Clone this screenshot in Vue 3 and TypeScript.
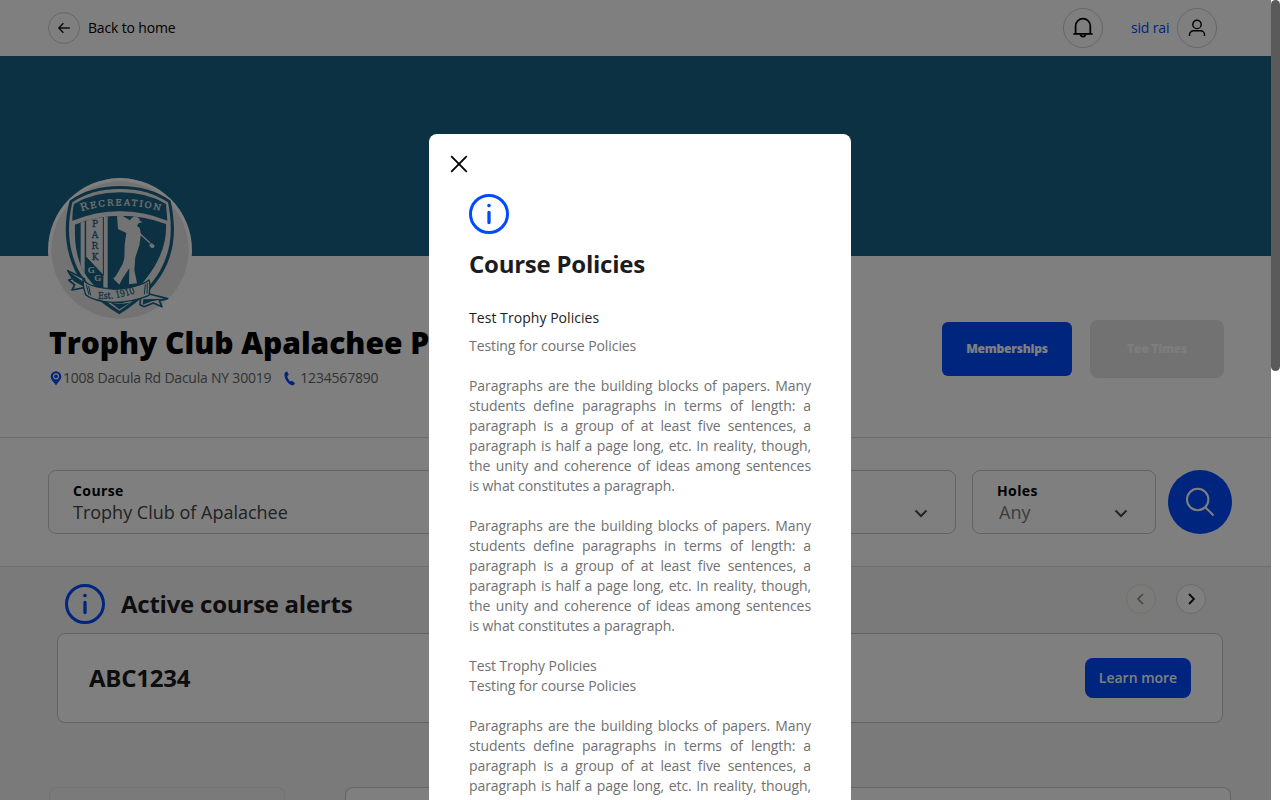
<script setup lang="ts">
interface Block {
  lines: string[]
}

const paragraph: string =
  'Paragraphs are the building blocks of papers. Many students define paragraphs in terms of length: a paragraph is a group of at least five sentences, a paragraph is half a page long, etc. In reality, though, the unity and coherence of ideas among sentences is\u00a0what constitutes a paragraph.'

const blocks: Block[] = [
  { lines: ['Testing for course Policies'] },
  { lines: [paragraph] },
  { lines: [paragraph] },
  { lines: ['Test Trophy Policies', 'Testing for course Policies'] },
  { lines: [paragraph] },
]

const parkLetters: string[] = ['P', 'A', 'R', 'K']
</script>

<template>
  <div class="screen">
    <div class="page">
      <header class="topbar">
        <a class="back">
          <span class="ring small">
            <svg width="14" height="14" viewBox="0 0 14 14" fill="none" stroke="#1c1c1c" stroke-width="1.4">
              <path d="M6.4 2.2 1.8 7l4.6 4.8M1.8 7h11" />
            </svg>
          </span>
          <span>Back to home</span>
        </a>
        <div class="account">
          <span class="ring">
            <svg width="24" height="24" viewBox="0 0 24 24" fill="none" stroke="#000" stroke-width="1.7">
              <path d="M4.600 17.800V10a7.300 7.300 0 0 1 14.700 0v7.800M2.400 17.800h19.200" />
              <path d="M9.300 18.600a2.800 2.800 0 0 0 5.400 0" />
            </svg>
          </span>
          <span class="user">sid rai</span>
          <span class="ring">
            <svg width="20" height="20" viewBox="0 0 20 20" fill="none" stroke="#000" stroke-width="1.4">
              <circle cx="10" cy="6.4" r="4.2" />
              <path d="M2.500 18v-1.200a4 4 0 0 1 4-4h7a4 4 0 0 1 4 4V18" />
            </svg>
          </span>
        </div>
      </header>

      <div class="banner"></div>

      <section class="club">
        <div class="club-logo">
          <svg width="144" height="144" viewBox="24 24 432 432">
            <defs>
              <path id="name-arc" d="M124 124Q240 88 364 124" />
              <path id="est-arc" d="M174 387Q232 390 294 366" />
              <clipPath id="field">
                <path d="M104 164Q240 112 378 162C382 240 340 320 242 405C112 335 104 250 104 164Z" />
              </clipPath>
            </defs>
            <circle cx="240" cy="240" r="206" fill="#e6e6e6" />
            <g fill="#166284">
              <path d="M89 92Q150 48 240 48T392 92C410 180 404 245 368 308Q330 374 238 433Q140 374 105 302C76 240 68 170 89 92Z" />
              <path d="M97 97Q155 57 240 57T384 97C400 178 394 240 360 302Q325 364 238 422Q150 366 114 298C84 236 80 170 97 97Z" fill="#e6e6e6" />
              <path d="M102 102Q160 67 240 67T378 102L382 152Q240 96 97 152Q97 120 102 102Z" />
              <path d="M240 402L212 398 238 418 270 398Z" />
            </g>
            <g clip-path="url(#field)">
              <rect x="90" y="100" width="300" height="300" fill="#166284" />
              <path d="M122 130h12v260h-12zM190 130h13v260h-13z" fill="#e6e6e6" />
              <path d="M137 148L190 133V316L137 260Z" fill="#e6e6e6" stroke="#166284" stroke-width="3" />
            </g>
            <g fill="#e6e6e6">
              <path d="M246 166L238 142 268 154 274 145 284 139 297 144 300 153 308 156 296 160 291 168 299 174 303 192 298 226 286 262 283 300 291 340 267 343 268 295 247 326 238 344 220 326 229 316 249 280 253 264 254 224 259 189 234 177 231 139 247 137 270 151 266 157 245 150 248 166 266 171Z" />
              <path d="M301 192L330 219" fill="none" stroke="#e6e6e6" stroke-width="4" />
              <ellipse cx="336" cy="227" rx="8" ry="6" transform="rotate(30 336 227)" />
            </g>
            <g fill="#e6e6e6" stroke="#166284" stroke-width="5" stroke-linejoin="round">
              <path d="M133 326L83 302 98 326 86 330 104 345 96 360 137 352Z" />
              <path d="M302 382L328 372 383 386 358 392 366 410 340 399 312 410 300 404Z" />
              <path d="M129 327Q140 352 226 358Q300 352 327 330Q332 340 327 376Q280 396 221 397Q160 394 137 374Q128 350 129 327Z" stroke-width="4" />
            </g>
            <path d="M88 307L132 337V350L101 334ZM310 388L374 386 335 394 308 404Z" fill="#166284" />
            <path d="M139 344l8 30M146 348l6 28M316 343l-3 30M322 339l-1 32" stroke="#166284" stroke-width="3" />
            <g class="crest-text">
              <text font-size="32" fill="#e6e6e6" stroke="#e6e6e6" stroke-width="0.8">
                <textPath href="#name-arc" textLength="240">R<tspan font-size="26">ECREATION</tspan></textPath>
              </text>
              <text v-for="(letter, i) in parkLetters" :key="letter" x="165" :y="172 + i * 33" font-size="27" text-anchor="middle" fill="#166284" stroke="#166284" stroke-width="0.8">{{ letter }}</text>
              <text class="bold" x="154" y="309" font-size="27" text-anchor="middle" fill="#e6e6e6">G</text>
              <text class="bold" x="173" y="333" font-size="27" text-anchor="middle" fill="#e6e6e6">G</text>
              <text font-size="29" fill="#166284" stroke="#166284" stroke-width="0.8">
                <textPath href="#est-arc" textLength="114" lengthAdjust="spacingAndGlyphs">Est. 1910</textPath>
              </text>
            </g>
          </svg>
        </div>
        <div class="club-row">
          <div>
            <h1>Trophy Club Apalachee Park</h1>
            <div class="contact">
              <svg class="pin" width="12" height="15" viewBox="0 0 12 15">
                <path d="M6 .2A5.300 5.300 0 0 0 .7 5.500C.7 9 4.500 11.600 6 14.500 7.500 11.600 11.300 9 11.300 5.500A5.300 5.300 0 0 0 6 .2Z" fill="#004aff" />
                <circle cx="6" cy="5.300" r="2.500" fill="#004aff" stroke="#fff" stroke-width="1.200" />
              </svg>
              <span class="address">1008 Dacula Rd Dacula NY 30019</span>
              <svg class="phone" width="12" height="15" viewBox="0 0 12 15">
                <path d="M1.200 1.300 3.300.4 4.800 3.800 3.300 5C3.500 7.200 4.700 9.300 6.500 10.500L8.200 9.700 11 12.200 9.700 14C6 15.500.2 9 .4 3.200Z" fill="#004aff" />
              </svg>
              <span>1234567890</span>
            </div>
          </div>
          <div class="club-actions">
            <button class="primary">Memberships</button>
            <button class="disabled">Tee Times</button>
          </div>
        </div>
      </section>

      <section class="search">
        <div class="field course">
          <div>
            <label>Course</label>
            <div class="value">Trophy Club of Apalachee</div>
          </div>
          <svg class="chev" width="14" height="9" viewBox="0 0 14 9" fill="none" stroke="#4a4a4a" stroke-width="2"><path d="M1.500 1.500 7 7l5.500-5.500" /></svg>
        </div>
        <div class="field holes">
          <div>
            <label>Holes</label>
            <div class="value muted">Any</div>
          </div>
          <svg class="chev" width="14" height="9" viewBox="0 0 14 9" fill="none" stroke="#4a4a4a" stroke-width="2"><path d="M1.500 1.500 7 7l5.500-5.500" /></svg>
        </div>
        <button class="go">
          <svg width="32" height="32" viewBox="0 0 32 32" fill="none" stroke="#fff" stroke-width="2">
            <circle cx="13.700" cy="13.500" r="10.700" />
            <path d="m21 21 8.600 8.500" />
          </svg>
        </button>
      </section>

      <section class="alerts">
        <div class="alerts-head">
          <div class="alerts-title">
            <svg width="40" height="40" viewBox="0 0 40 40" fill="none" stroke="#004aff">
              <circle cx="20" cy="20" r="18.500" stroke-width="3" />
              <path d="M20 18.500v10" stroke-width="3.300" stroke-linecap="round" />
              <circle cx="20" cy="11.600" r="1.800" fill="#004aff" stroke="none" />
            </svg>
            <h2>Active course alerts</h2>
          </div>
          <div class="pager">
            <span class="page-btn off">
              <svg width="8" height="12" viewBox="0 0 8 12" fill="none" stroke="#8a8a8a" stroke-width="1.700"><path d="M6 1 1 6l5 5" /></svg>
            </span>
            <span class="page-btn">
              <svg width="8" height="12" viewBox="0 0 8 12" fill="none" stroke="#111" stroke-width="1.900"><path d="m2 1 5 5-5 5" /></svg>
            </span>
          </div>
        </div>
        <div class="alert-card">
          <h2>ABC1234</h2>
          <button class="learn">Learn more</button>
        </div>
        <div class="results">
          <div class="filters"></div>
          <div class="list"></div>
        </div>
      </section>
    </div>

    <div class="track"><div class="thumb"></div></div>

    <div class="overlay">
      <div class="modal" role="dialog">
        <svg class="close" width="18" height="18" viewBox="0 0 18 18" fill="none" stroke="#000" stroke-width="1.800"><path d="m1.200 1.200 15.600 15.600M16.800 1.200 1.200 16.800" /></svg>
        <div class="body">
          <svg class="info" width="40" height="40" viewBox="0 0 40 40" fill="none" stroke="#004aff">
            <circle cx="20" cy="20" r="18.500" stroke-width="3" />
            <path d="M20 18.500v10" stroke-width="3.300" stroke-linecap="round" />
            <circle cx="20" cy="11.600" r="1.800" fill="#004aff" stroke="none" />
          </svg>
          <h2>Course Policies</h2>
          <h3>Test Trophy Policies</h3>
          <div class="policies">
            <div v-for="(block, i) in blocks" :key="i">
              <p v-for="line in block.lines" :key="line">{{ line }}</p>
            </div>
          </div>
        </div>
      </div>
    </div>
  </div>
</template>

<style>
body {
  margin: 0;
  overflow: hidden;
}
</style>

<style scoped>
* {
  box-sizing: border-box;
}
.screen {
  position: relative;
  display: flex;
  width: 1280px;
  height: 800px;
  overflow: hidden;
  font-family: "Open Sans", "Noto Sans", sans-serif;
  font-size: 14px;
  line-height: 20px;
  color: #000;
}
svg {
  display: block;
  flex: none;
}
h1, h2, h3, p {
  margin: 0;
}
button {
  border: 0;
  padding: 0;
  font-family: inherit;
  color: #fff;
  background: #004aff;
}
.page {
  display: flex;
  flex-direction: column;
  width: 1271px;
  height: 800px;
  background: #fff;
}
.track {
  width: 9px;
  height: 800px;
  background: #fff;
}
.thumb {
  height: 371px;
  border-radius: 5px;
  background: #5a5a5a;
}
.topbar {
  flex: none;
  display: flex;
  align-items: center;
  justify-content: space-between;
  height: 56px;
  padding: 0 54px 0 48px;
}
.back, .account {
  display: flex;
  align-items: center;
  gap: 8px;
  letter-spacing: -0.17px;
}
.ring {
  display: flex;
  align-items: center;
  justify-content: center;
  width: 40px;
  height: 40px;
  border: 1px solid #cfcfcf;
  border-radius: 50%;
}
.ring.small {
  width: 32px;
  height: 32px;
}
.user {
  width: 38px;
  margin-left: 20px;
  white-space: nowrap;
  color: #004aff;
}
.banner {
  flex: none;
  height: 200px;
  background: #166284;
}
.club {
  flex: none;
  height: 182px;
  padding: 0 47px 0 48px;
  border-bottom: 1px solid #dcdcdc;
}
.club-logo {
  width: 144px;
  height: 144px;
  margin-top: -78px;
  border-radius: 50%;
  background: #fff;
}
.crest-text {
  font-family: "DejaVu Serif", serif;
}
.crest-text .bold {
  font-family: "Liberation Serif", serif;
  font-weight: 700;
}
.club-row {
  display: flex;
  justify-content: space-between;
  align-items: flex-start;
}
h1 {
  padding-left: 1px;
  font-size: 30px;
  line-height: 42px;
  font-weight: 800;
  letter-spacing: -0.04px;
  white-space: nowrap;
}
.contact {
  display: flex;
  align-items: center;
  margin-top: 4px;
  letter-spacing: -0.2px;
  color: #666;
}
.address {
  letter-spacing: -0.22px;
}
.pin {
  margin: 0 1px 0 2px;
}
.phone {
  margin: 0 4px 0 13px;
}
.club-actions {
  display: flex;
  align-items: center;
  gap: 18px;
  margin-top: -2px;
}
.primary, .disabled {
  padding-bottom: 2px;
  font-size: 12px;
  font-weight: 800;
  letter-spacing: -0.2px;
}
.primary {
  width: 130px;
  height: 54px;
  border-radius: 6px;
}
.disabled {
  width: 134px;
  height: 58px;
  border-radius: 8px;
  color: #fafafa;
  background: #e4e4e4;
}
.search {
  flex: none;
  display: flex;
  height: 129px;
  padding: 32px 39px 32px 48px;
  border-bottom: 1px solid #dcdcdc;
}
.field {
  display: flex;
  justify-content: space-between;
  height: 64px;
  padding: 10px 27px 0 24px;
  border: 1px solid #c8c8c8;
  border-radius: 8px;
}
.course {
  width: 908px;
  margin-right: 16px;
}
.holes {
  width: 184px;
  margin-right: 12px;
}
label {
  display: block;
  font-weight: 700;
  line-height: 20px;
  letter-spacing: 0.4px;
}
.value {
  font-size: 18px;
  line-height: 23px;
  color: #444;
}
.value.muted {
  padding-left: 2px;
  color: #777;
}
.chev {
  margin-top: 28px;
}
.go {
  display: flex;
  align-items: center;
  justify-content: center;
  width: 64px;
  height: 64px;
  border-radius: 50%;
}
.alerts {
  flex: 1;
  padding: 17px 40px 0 49px;
  background: #f4f4f4;
}
.alerts-head {
  display: flex;
  justify-content: space-between;
  height: 49px;
  padding: 0 25px 0 16px;
}
.alerts-title {
  display: flex;
  align-items: center;
  gap: 16px;
  height: 40px;
}
h2 {
  font-size: 24px;
  line-height: 32px;
  font-weight: 700;
  letter-spacing: -0.24px;
  color: #1c1c20;
}
.pager {
  display: flex;
  gap: 20px;
}
.page-btn {
  display: flex;
  align-items: center;
  justify-content: center;
  width: 30px;
  height: 30px;
  border: 1px solid #d6d6d6;
  border-radius: 50%;
  background: #fff;
}
.page-btn.off {
  border-color: #e4e4e0;
  background: #f7f6f3;
}
.alert-card {
  display: flex;
  align-items: center;
  justify-content: space-between;
  height: 90px;
  margin: 0 8px;
  padding: 0 31px;
  border: 1px solid #c4c4c4;
  border-radius: 8px;
  background: #fff;
}
.learn {
  width: 106px;
  height: 40px;
  padding-bottom: 2px;
  border-radius: 8px;
  font-size: 14px;
  font-weight: 600;
}
.results {
  display: flex;
  justify-content: space-between;
  height: 13px;
  margin-top: 64px;
}
.filters, .list {
  border: 1px solid #c8c8c8;
  border-bottom: 0;
  border-radius: 8px 8px 0 0;
}
.filters {
  width: 236px;
  border-color: #e6e6e6;
}
.list {
  width: 886px;
  background: #fff;
}
.overlay {
  position: absolute;
  top: 0;
  left: 0;
  width: 1271px;
  height: 800px;
  background: rgba(0, 0, 0, 0.5);
}
.modal {
  width: 422px;
  height: 700px;
  margin: 134px 0 0 429px;
  padding: 21px;
  border-radius: 8px;
  background: #fff;
}
.body {
  padding: 21px 19px 0;
}
.body h2 {
  margin-top: 14px;
}
.body h3 {
  margin-top: 28px;
  font-size: 14px;
  line-height: 20px;
  font-weight: 500;
  letter-spacing: 0.05px;
  color: #1c1c20;
}
.policies {
  display: flex;
  flex-direction: column;
  gap: 20px;
  margin-top: 8px;
  letter-spacing: -0.08px;
  color: #707070;
  text-align: justify;
}
</style>
